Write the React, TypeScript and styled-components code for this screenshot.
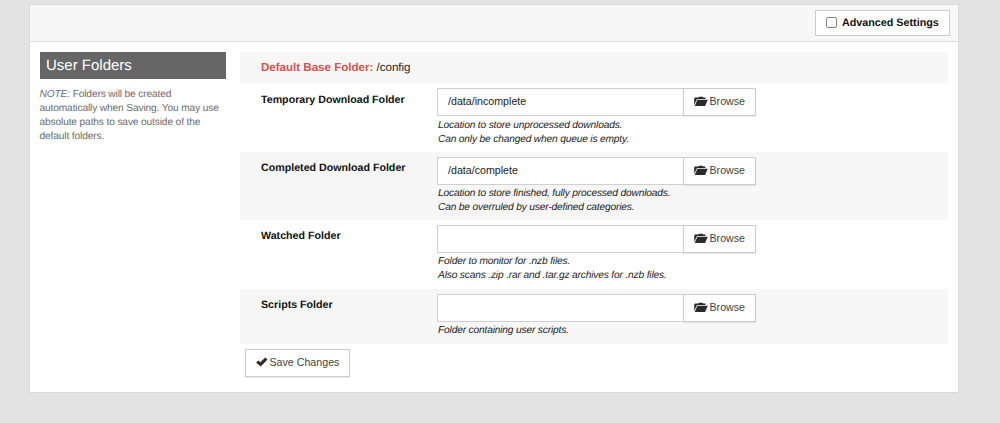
import React from "react";
import styled, { createGlobalStyle } from "styled-components";

const GlobalStyle = createGlobalStyle`
  * { box-sizing: border-box; }
  html, body { height: 100%; }
  body {
    margin: 0;
    background: #e3e3e3;
    font-family: "Liberation Sans", Arial, sans-serif;
    font-size: 10.67px;
    line-height: 14px;
    color: #222;
    text-rendering: geometricPrecision;
    overflow: hidden;
  }
`;

const Page = styled.div`
  padding: 4px 41px 0 29px;
`;

const Panel = styled.main`
  height: 389px;
  background: #fff;
  border: 1px solid #dadada;
`;

const Toolbar = styled.header`
  display: flex;
  justify-content: flex-end;
  height: 37px;
  padding: 5px 8px 0 0;
  background: #f7f7f7;
  border-bottom: 1px solid #dcdcdc;
`;

const AdvancedToggle = styled.label`
  display: flex;
  align-items: center;
  width: 135px;
  height: 26px;
  padding: 0 0 1px 9.5px;
  background: #fff;
  border: 1px solid #ccc;
  font-size: 10.75px;
  font-weight: bold;
  color: #111;
`;

const Checkbox = styled.input`
  appearance: none;
  width: 11px;
  height: 11px;
  margin: 0 5.5px 0 0;
  border: 1px solid #858585;
  border-radius: 2px;
  background: #fff;
`;

const Content = styled.div`
  display: flex;
  gap: 14px;
  padding: 10px 10px 0 9.5px;
`;

const Sidebar = styled.aside`
  width: 186.5px;
  flex: none;
`;

const Title = styled.h3`
  height: 26.5px;
  margin: 0 0 9.5px;
  padding-left: 6.5px;
  background: #666;
  color: #fff;
  font-size: 15px;
  font-weight: normal;
  line-height: 27px;
`;

const Note = styled.p`
  margin: 0;
  font-size: 10.2px;
  letter-spacing: -0.14px;
  line-height: 14px;
  color: #6c6c6c;
  white-space: nowrap;
`;

const Form = styled.form`
  flex: 1;
`;

const Row = styled.section<{ $height: number; $shaded?: boolean }>`
  display: flex;
  height: ${(p) => p.$height}px;
  padding: 5px 0 0 21px;
  background: ${(p) => (p.$shaded ? "#f7f7f7" : "#fff")};
`;

const BaseFolder = styled.div`
  padding-top: 4px;
  font-size: 11.55px;
`;

const Accent = styled.b`
  color: #d9534f;
`;

const Label = styled.label<{ $offset: number }>`
  width: 176px;
  padding-top: ${(p) => 4 + p.$offset}px;
  flex: none;
  font-weight: bold;
  color: #111;
`;

const InputGroup = styled.div`
  display: flex;
  width: 319px;
  height: 28px;
`;

const TextInput = styled.input`
  width: 246px;
  height: 28px;
  padding: 0 10px 3px;
  border: 1px solid #d0d0cc;
  border-right: 0;
  outline: 0;
  background: #fff;
  color: #222;
  font: inherit;
`;

const Button = styled.button<{ $width: number }>`
  display: flex;
  align-items: center;
  width: ${(p) => p.$width}px;
  height: 28px;
  padding: 0 0 2px 9.5px;
  border: 1px solid #ccc;
  background: #fff;
  box-shadow: 0 1px 1px rgba(0, 0, 0, 0.08);
  color: #444;
  font: inherit;
  white-space: pre;
`;

const Help = styled.div<{ $offset: number }>`
  margin: ${(p) => 2 + p.$offset}px 0 0 1px;
  font-size: 10.2px;
  letter-spacing: -0.165px;
  font-style: italic;
  line-height: 14px;
  white-space: pre-line;
`;

const Actions = styled.div`
  padding: 5px 0 0 5px;
`;

const Icon = styled.svg`
  flex: none;
  margin-right: 2px;
  fill: #2b2b2b;
`;

const FolderIcon = () => (
  <Icon width="14" height="11" viewBox="0 0 14 11">
    <path d="M0.2 8.6V2.3L1 1.5H4.2L5 0.7H8.5L9.3 1.5H11.4V3.1H3L0.4 8.6Z" />
    <path d="M3.4 3.7H13.8L11.1 10.1H0.7Z" />
  </Icon>
);

const CheckIcon = () => (
  <Icon width="12" height="10" viewBox="0 0 12 10">
    <path d="M0.2 5.5L2.3 3.5L4.4 5.3L9.2 0.5L11.5 2.5L4.7 9.5Z" />
  </Icon>
);

const folders = [
  { label: "Temporary Download Folder", value: "/data/incomplete", help: "Location to store unprocessed downloads.\nCan only be changed when queue is empty.", height: 69, offset: 1 },
  { label: "Completed Download Folder", value: "/data/complete", help: "Location to store finished, fully processed downloads.\nCan be overruled by user-defined categories.", height: 68, offset: 0 },
  { label: "Watched Folder", value: "", help: "Folder to monitor for .nzb files.\nAlso scans .zip .rar and .tar.gz archives for .nzb files.", height: 69, offset: 0 },
  { label: "Scripts Folder", value: "", help: "Folder containing user scripts.", height: 55, offset: 0 },
];

export default function App() {
  return (
    <Page>
      <GlobalStyle />
      <Panel>
        <Toolbar>
          <AdvancedToggle>
            <Checkbox type="checkbox" />
            Advanced Settings
          </AdvancedToggle>
        </Toolbar>
        <Content>
          <Sidebar>
            <Title>User Folders</Title>
            <Note>
              <em>NOTE:</em> Folders will be created
              <br />
              automatically when Saving. You may use
              <br />
              absolute paths to save outside of the
              <br />
              default folders.
            </Note>
          </Sidebar>
          <Form>
            <Row $height={31} $shaded>
              <BaseFolder>
                <Accent>Default Base Folder:</Accent> /config
              </BaseFolder>
            </Row>
            {folders.map((folder, i) => (
              <Row key={folder.label} $height={folder.height} $shaded={i % 2 === 1}>
                <Label $offset={folder.offset}>{folder.label}</Label>
                <div>
                  <InputGroup>
                    <TextInput defaultValue={folder.value} />
                    <Button type="button" $width={73}>
                      <FolderIcon />
                      Browse
                    </Button>
                  </InputGroup>
                  <Help $offset={folder.offset}>{folder.help}</Help>
                </div>
              </Row>
            ))}
            <Actions>
              <Button type="button" $width={105}>
                <CheckIcon />
                Save Changes
              </Button>
            </Actions>
          </Form>
        </Content>
      </Panel>
    </Page>
  );
}
